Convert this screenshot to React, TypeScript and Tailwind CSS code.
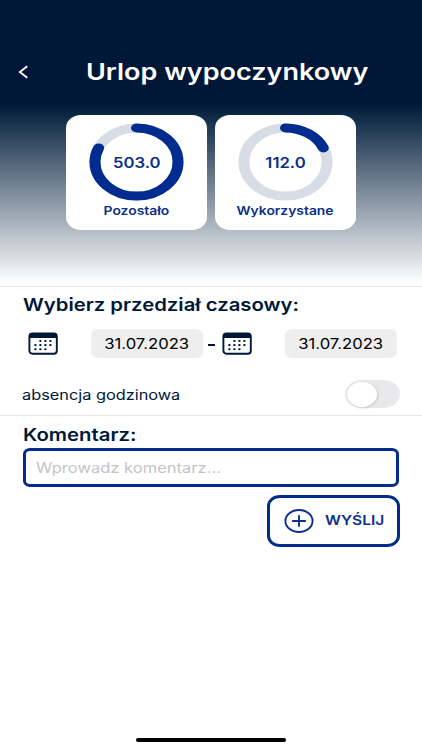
import { useState } from 'react'

const TOTAL = 615

function Ring({ value }: { value: number }) {
  return (
    <svg className="h-[78px] w-[95px]" viewBox="0 0 78 78" preserveAspectRatio="none" fill="none">
      <circle cx="39" cy="39" r="34.1" stroke="#d8dde5" strokeWidth="9" />
      <circle
        cx="39"
        cy="39"
        r="34.1"
        stroke="#002c8f"
        strokeWidth="9"
        strokeLinecap="round"
        pathLength={100}
        strokeDasharray={`${(value / TOTAL) * 100} 100`}
        transform="rotate(-90 39 39)"
      />
    </svg>
  )
}

function BalanceCard({ value, label }: { value: number; label: string }) {
  return (
    <div className="flex h-[115px] w-[141px] flex-col items-center rounded-[15px/13px] bg-white pt-[8px] text-[#0b2f8a]">
      <div className="grid place-items-center *:col-start-1 *:row-start-1">
        <Ring value={value} />
        <span className="mt-[2px] inline-block scale-x-[1.15] text-[14.5px] leading-none font-semibold">
          {value.toFixed(1)}
        </span>
      </div>
      <span className="mt-[4px] inline-block scale-x-[1.155] text-[12px] leading-[12px] font-semibold">{label}</span>
    </div>
  )
}

// [x, y] centres of the day marks
const days = [
  [12.4, 9], [17.4, 9], [22.4, 9],
  [7.4, 13.1], [12.4, 13.1], [17.4, 13.1], [22.4, 13.1],
  [7.4, 17.2], [12.4, 17.2], [17.4, 17.2],
]

function CalendarIcon() {
  return (
    <svg className="h-[23px] w-[30px] shrink-0" viewBox="0 0 30 23" fill="none">
      <rect x="1.4" y="1.4" width="27.4" height="20.4" rx="3" stroke="#001737" strokeWidth="1.9" />
      <path d="M1 6V3.6Q1 1 4 1H26Q29 1 29 3.6V6Z" fill="#001737" />
      {days.map(([x, y]) => (
        <ellipse key={`${x}-${y}`} cx={x} cy={y} rx="1.25" ry="1.05" fill="#001737" />
      ))}
    </svg>
  )
}

function DateField({ value }: { value: string }) {
  return (
    <button className="flex h-[29px] w-[112px] shrink-0 items-center justify-center rounded-[7px/6px] bg-[#eeeeef] text-[14px] text-black">
      <span className="inline-block scale-x-[1.19]">{value}</span>
    </button>
  )
}

export default function App() {
  const [hourly, setHourly] = useState(false)
  const [comment, setComment] = useState('')

  return (
    <div className="flex h-[750px] w-[422px] flex-col overflow-hidden bg-white font-['Inter',sans-serif] text-[#001737]">
      <header className="h-[286px] bg-[linear-gradient(#001737_0px,#001737_100px,#001c3a_106px,#ffffff_283px)]">
        <div className="flex h-[115px] items-center pt-[29px] pl-[18px] text-white">
          <svg className="h-[14px] w-[11px]" viewBox="0 0 11 14" fill="none" stroke="currentColor" strokeWidth="1.9">
            <path d="M9.2 1.3L1.9 7L9.2 12.7" />
          </svg>
          <h1 className="ml-[57px] origin-left scale-x-[1.2] text-[22.5px] leading-none font-semibold whitespace-nowrap">
            Urlop wypoczynkowy
          </h1>
        </div>
        <div className="flex justify-center gap-[8px]">
          <BalanceCard value={503} label="Pozostało" />
          <BalanceCard value={112} label="Wykorzystane" />
        </div>
      </header>

      <section className="h-[129px] border-t border-[#e6e6e8]">
        <h2 className="mt-[8px] ml-[23px] origin-left scale-x-[1.16] text-[17.5px] leading-[20px] font-semibold">
          Wybierz przedział czasowy:
        </h2>
        <div className="mt-[14px] flex h-[29px] items-center pl-[28px]">
          <CalendarIcon />
          <div className="ml-[33px]">
            <DateField value="31.07.2023" />
          </div>
          <span className="mt-[2px] mr-[7px] ml-[5px] h-[2px] w-[7px] bg-[#001737]" />
          <CalendarIcon />
          <div className="ml-[33px]">
            <DateField value="31.07.2023" />
          </div>
        </div>
        <div className="mt-[22px] flex h-[28px] items-center justify-between pr-[22px] pl-[22px]">
          <span className="origin-left scale-x-[1.165] text-[14px]">absencja godzinowa</span>
          <button
            role="switch"
            aria-checked={hourly}
            onClick={() => setHourly(!hourly)}
            className="flex h-[28px] w-[55px] items-center rounded-[17px/14px] bg-[#e9e9eb] px-[2px] aria-checked:justify-end"
          >
            <span className="h-[25px] w-[30px] rounded-[50%] bg-white shadow-[1px_1px_3px_rgba(0,0,0,0.15)]" />
          </button>
        </div>
      </section>

      <section className="flex flex-1 flex-col border-t border-[#e6e6e8] pr-[23px] pl-[23px]">
        <h2 className="mt-[9px] origin-left scale-x-[1.16] text-[17.5px] leading-[20px] font-semibold">Komentarz:</h2>
        <div className="mt-[3px] flex h-[39px] items-center overflow-hidden rounded-[7px/6px] border-[3px] border-[#002c8f] pl-[10px]">
          <input
            value={comment}
            onChange={(e) => setComment(e.target.value)}
            placeholder="Wprowadz komentarz..."
            className="w-[280px] shrink-0 origin-left scale-x-[1.18] text-[14px] outline-none placeholder:text-[#c4c4c6]"
          />
        </div>
        <button className="mt-[8px] flex h-[52px] w-[133px] items-center self-end rounded-[13px/11px] border-[3px] border-[#002c8f] pl-[14px] text-[#0b2f8a] -mr-px">
          <svg className="h-[24px] w-[30px]" viewBox="0 0 30 24" fill="none" stroke="currentColor">
            <ellipse cx="15" cy="12" rx="13.6" ry="11" strokeWidth="1.9" />
            <path d="M8.8 12H21.2M15 7V17" strokeWidth="1.9" strokeLinecap="round" />
          </svg>
          <span className="ml-[11px] origin-left scale-x-[1.2] text-[13px] font-semibold">WYŚLIJ</span>
        </button>
        <div className="mt-auto mb-[8px] h-[4px] w-[150px] self-center rounded-full bg-black" />
      </section>
    </div>
  )
}
